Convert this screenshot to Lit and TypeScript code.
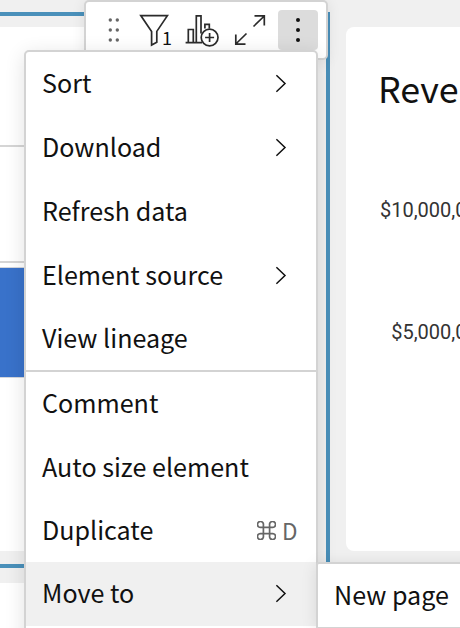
import { LitElement, html, css, svg, nothing } from "lit";
import { customElement, property } from "lit/decorators.js";

const chevron = svg`<path d="M1.4 1.2 10 9.5 1.4 17.8" fill="none" stroke="#111" stroke-width="1.5"/>`;

@customElement("menu-row")
class MenuRow extends LitElement {
  @property() label = "";
  @property() shortcut = "";
  @property({ type: Boolean }) submenu = false;

  static styles = css`
    :host { display: flex; align-items: center; justify-content: space-between; box-sizing: border-box; padding: 0 19px 0 16px; white-space: nowrap; }
    .label { line-height: 36px; padding-bottom: 2.4px; }
    .shortcut { display: flex; align-items: center; gap: 6.5px; color: #666; font-size: 22.5px; line-height: 36px; margin-right: -0.5px; }
    .key { padding-bottom: 1.6px; }
    .arrow { margin: 0 10px 0 0; display: block; }
  `;

  render() {
    return html`
      <span class="label">${this.label}</span>
      ${this.shortcut
        ? html`<span class="shortcut">
            <svg width="19" height="19" viewBox="0 0 19 19" fill="none" stroke="#666" stroke-width="1.7">
              <path d="M6.4 6.4H4A3 3 0 1 1 6.4 4V15A3 3 0 1 1 4 12.6H15A3 3 0 1 1 12.6 15V4A3 3 0 1 1 15 6.4Z"/>
            </svg><span class="key">${this.shortcut}</span></span>`
        : nothing}
      ${this.submenu ? html`<svg class="arrow" width="12" height="19" viewBox="0 0 12 19">${chevron}</svg>` : nothing}
    `;
  }
}

@customElement("element-toolbar")
class ElementToolbar extends LitElement {
  static styles = css`
    :host { display: block; box-sizing: border-box; background: #fff; border: 2px solid #d3d3d3; border-radius: 5px; box-shadow: 0 2px 14px rgba(0, 0, 0, 0.09); }
    .bar { display: flex; height: 56px; }
    .icons { display: block; width: 192px; height: 56px; flex: none; }
    .more { display: block; width: 40px; height: 40px; margin-top: 8px; background: #dcdcdc; border-radius: 4px; }
    .count { font-size: 18px; fill: #111; }
  `;

  render() {
    return html`<div class="bar">
      <svg class="icons" viewBox="86 2 192 56" fill="none" stroke="#2b2b2b" stroke-width="1.7">
        <g fill="#666" stroke="none">
          ${[20, 30, 40].map((y) => svg`<circle cx="110.3" cy=${y} r="1.7"/><circle cx="117.3" cy=${y} r="1.7"/>`)}
        </g>
        <path d="M140.8 15.6H167.4L156.8 31.4V42.3L151.6 45V31.4Z"/>
        <text class="count" stroke="none" x="162" y="45">1</text>
        <path d="M185.6 42.6H202M188.3 42.6V29.5H193.3V42.6M196.3 42.6V15.8H201V33.5M204.9 28.5V24.4H209.3V28.5"/>
        <circle cx="209.6" cy="37.5" r="8.4"/>
        <path d="M209.6 33V42M205.1 37.5H214.1"/>
        <path d="M253.5 26.5 264.3 16M254.5 15.9H264.3V25.5M246.5 33.5 235.8 44M235.8 34.5V44.1H245.5"/>
      </svg>
      <svg class="more" viewBox="0 0 40 40" fill="#111">
        <circle cx="20" cy="10" r="2"/><circle cx="20" cy="20" r="2"/><circle cx="20" cy="30" r="2"/>
      </svg>
    </div>`;
  }
}

@customElement("app-root")
class AppRoot extends LitElement {
  static styles = css`
    :host { display: block; position: relative; width: 460px; height: 628px; overflow: hidden; background: #f0f0f0; color: #111; font-family: "Noto Sans CJK SC", "Noto Sans", sans-serif; font-size: 25.1px; }
    .page { display: flex; gap: 16px; height: 628px; }
    .left { flex: none; width: 330px; display: flex; flex-direction: column; }
    .selected { box-sizing: border-box; height: 556px; margin-top: 12px; border: 4px solid #4a90ba; border-left: 0; padding: 11px 8px 13px 0; }
    .table { display: flex; flex-direction: column; height: 524px; background: #fff; }
    .head { height: 118px; border-bottom: 2px solid #d5d5d5; }
    .sub { height: 114px; border-bottom: 2px solid #d5d5d5; }
    .band { height: 109px; margin-top: 4px; background: #3972ca; border: solid #d3d6dc; border-width: 1px 0; }
    .next { flex: 1; margin-top: 15px; background: #fff; }
    .card { flex: none; width: 400px; box-sizing: border-box; height: 524px; margin-top: 27px; background: #fff; border-radius: 8px; padding: 34px 0 0 32px; }
    .title { font-size: 35.8px; line-height: 52px; }
    .axis { display: flex; flex-direction: column; align-items: flex-end; gap: 98px; width: 111px; margin-top: 85px; font: 20px/24px Roboto, sans-serif; color: #333; }
    element-toolbar { position: absolute; left: 84px; top: 0; width: 244px; }
    .menu { position: absolute; left: 24px; top: 50px; width: 294px; height: 600px; box-sizing: border-box; background: #fff; border: 2px solid #d3d3d3; border-radius: 5px; box-shadow: 0 4px 20px rgba(0, 0, 0, 0.12); }
    .group { display: grid; grid-template-rows: 63px 64px 64px 64px 63px; }
    .group.edit { grid-template-rows: 63px 64px 63px; border-top: 2px solid #d3d3d3; }
    .active { height: 64px; padding-bottom: 1px; background: #f0f0f0; }
    .submenu { position: absolute; left: 316px; top: 562px; width: 200px; box-sizing: border-box; background: #fff; border: 2px solid #d3d3d3; border-radius: 3px 0 0 0; box-shadow: 0 2px 16px rgba(0, 0, 0, 0.1); }
    .submenu menu-row { height: 63px; padding-bottom: 1px; }
  `;

  render() {
    return html`
      <div class="page">
        <div class="left">
          <div class="selected"><div class="table">
            <div class="head"></div><div class="sub"></div><div class="band"></div>
          </div></div>
          <div class="next"></div>
        </div>
        <div class="card">
          <div class="title">Revenue</div>
          <div class="axis"><span>$10,000,000</span><span>$5,000,000</span></div>
        </div>
      </div>
      <element-toolbar></element-toolbar>
      <div class="menu">
        <div class="group">
          <menu-row label="Sort" submenu></menu-row>
          <menu-row label="Download" submenu></menu-row>
          <menu-row label="Refresh data"></menu-row>
          <menu-row label="Element source" submenu></menu-row>
          <menu-row label="View lineage"></menu-row>
        </div>
        <div class="group edit">
          <menu-row label="Comment"></menu-row>
          <menu-row label="Auto size element"></menu-row>
          <menu-row label="Duplicate" shortcut="D"></menu-row>
        </div>
        <menu-row class="active" label="Move to" submenu></menu-row>
      </div>
      <div class="submenu"><menu-row label="New page"></menu-row></div>
    `;
  }
}
